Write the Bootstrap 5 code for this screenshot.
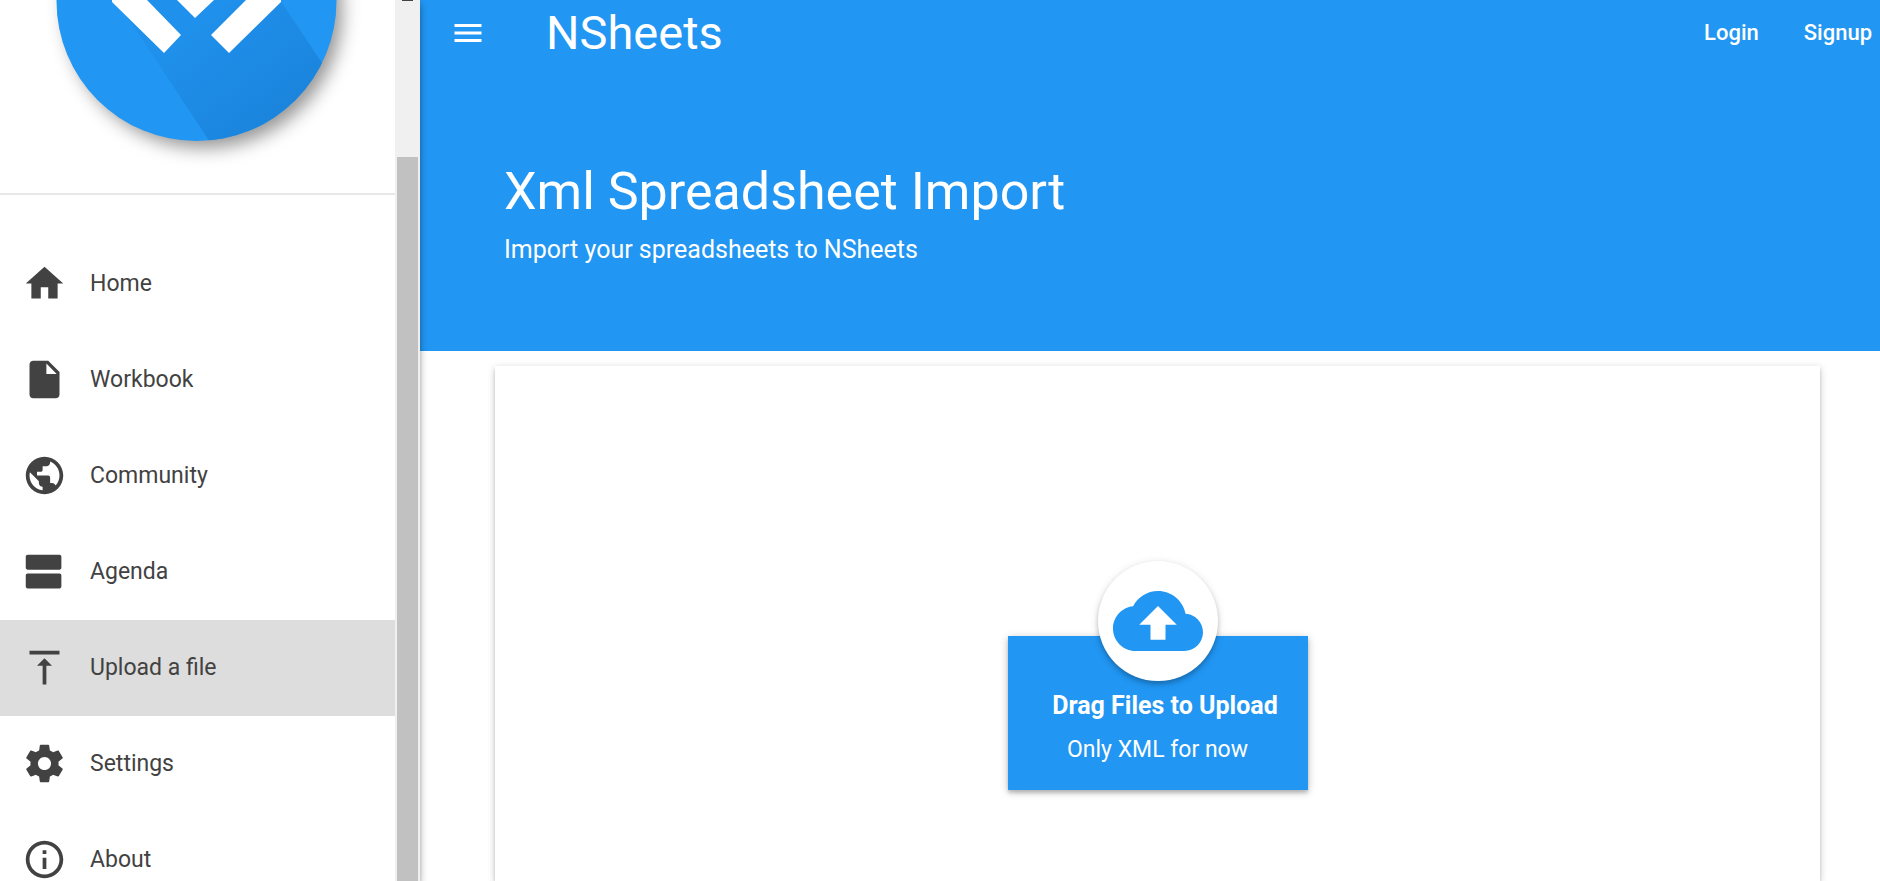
<!DOCTYPE html>
<html lang="en">
<head>
<meta charset="utf-8">
<meta name="viewport" content="width=device-width, initial-scale=1">
<title>NSheets</title>
<link rel="stylesheet" href="https://cdn.jsdelivr.net/npm/bootstrap@5.3.0/dist/css/bootstrap.min.css">
<style>
  :root { --brand: #2196f3; --ink: #424242; }
  body { font-family: Roboto, "Liberation Sans", sans-serif; font-size: 23px; line-height: 32px; color: var(--ink); }
  .side-panel { width: 420px; z-index: 2; box-shadow: 0 3px 4px rgba(0,0,0,.14), 0 4px 8px rgba(0,0,0,.3); }
  .brand-logo { height: 193px; }
  .side-rule { border-bottom: 2px solid #e8e8e8; margin-bottom: 41px; }
  .side-link { height: 96px; padding-left: 22px; gap: 23px; color: var(--ink); text-decoration: none; }
  .side-link svg { width: 45px; height: 45px; margin-bottom: 1px; fill: currentColor; }
  .side-link:hover, .side-link.active { background: #ddd; }
  .scroll-track { width: 25px; background: #f0f0f0; padding: 0 2px; }
  .scroll-arrow { width: 11px; height: 1px; background: #444; margin-bottom: 156px; }
  .scroll-thumb { background: #c1c1c1; }
  .hero { background: var(--brand); color: #fff; height: 351px; }
  .top-bar { height: 66px; padding: 0 8px 0 30px; }
  .menu-btn svg { width: 36px; height: 36px; fill: #fff; }
  .site-name { font-size: 47px; line-height: 66px; margin-left: 60px; }
  .top-links { gap: 45px; font-size: 22px; line-height: 34px; font-weight: 500; }
  .top-links a { color: #fff; text-decoration: none; }
  .hero-text { padding: 94px 84px 0; }
  .hero-text h1 { font-size: 52px; line-height: 64px; font-weight: 400; margin: 0 0 10px; }
  .hero-text p, .drop-title { font-size: 25px; }
  .sheet { margin: 15px 60px 0 75px; padding-top: 270px; background: #fff; box-shadow: 0 3px 3px rgba(0,0,0,.14), 0 2px 8px rgba(0,0,0,.2); }
  .drop-box { width: 300px; height: 154px; background: var(--brand); color: #fff; cursor: pointer; box-shadow: 0 3px 3px rgba(0,0,0,.14), 0 2px 8px rgba(0,0,0,.25); }
  .drop-icon { width: 120px; height: 120px; margin-top: -75px; margin-bottom: 9px; box-shadow: 0 3px 4px rgba(0,0,0,.18), 0 2px 8px rgba(0,0,0,.15); }
  .drop-icon svg { width: 90px; height: 90px; fill: var(--brand); }
  .drop-title { margin-bottom: 12px; padding-left: 15px; }
</style>
</head>
<body class="bg-white">
<div class="d-flex vh-100 overflow-hidden">
  <aside class="side-panel d-flex flex-shrink-0 bg-white position-relative">
    <div class="flex-grow-1 overflow-hidden">
      <svg class="brand-logo d-block w-100" viewBox="0 0 395 193" role="img" aria-label="NSheets logo">
        <defs>
          <linearGradient id="fold" gradientUnits="userSpaceOnUse" x1="190" y1="30" x2="270" y2="130">
            <stop offset="0" stop-color="#1f90eb"/><stop offset="1" stop-color="#1b84dc"/>
          </linearGradient>
          <clipPath id="disc"><circle cx="196.500" cy="1" r="140"/></clipPath>
          <filter id="soft" x="-20%" y="-20%" width="140%" height="140%"><feGaussianBlur stdDeviation="9"/></filter>
        </defs>
        <circle cx="204" cy="10" r="138" fill="#000" fill-opacity=".42" filter="url(#soft)"/>
        <circle cx="196.500" cy="1" r="140" fill="#2196f3"/>
        <path d="M116 0 210 142H340V90L280 0z" fill="url(#fold)" clip-path="url(#disc)"/>
        <path d="M112 0V2L164 53 181 35 147 0zM177 0 195 18 214 0zM246 0 211 35 229 53 281 2V0z" fill="#fff"/>
      </svg>
      <div class="side-rule"></div>
      <nav class="d-flex flex-column" aria-label="Main">
        <a class="side-link d-flex align-items-center" href="#"><svg viewBox="0 0 24 24" aria-hidden="true"><path d="M10 20v-6h4v6h5v-8h3L12 3 2 12h3v8z"/></svg><span>Home</span></a>
        <a class="side-link d-flex align-items-center" href="#"><svg viewBox="0 0 24 24" aria-hidden="true"><path d="M6 2c-1.100 0-1.990.900-1.990 2L4 20c0 1.100.890 2 1.990 2H18c1.100 0 2-.900 2-2V8l-6-6H6zm7 7V3.500L18.500 9H13z"/></svg><span>Workbook</span></a>
        <a class="side-link d-flex align-items-center" href="#"><svg viewBox="0 0 24 24" aria-hidden="true"><path d="M12 2C6.480 2 2 6.480 2 12s4.480 10 10 10 10-4.480 10-10S17.520 2 12 2zm-1 17.930c-3.950-.490-7-3.850-7-7.930 0-.620.080-1.210.210-1.790L9 15v1c0 1.100.900 2 2 2v1.930zm6.900-2.540c-.260-.810-1-1.390-1.900-1.390h-1v-3c0-.550-.450-1-1-1H8v-2h2c.550 0 1-.450 1-1V7h2c1.100 0 2-.900 2-2v-.410c2.930 1.190 5 4.060 5 7.410 0 2.080-.800 3.970-2.100 5.390z"/></svg><span>Community</span></a>
        <a class="side-link d-flex align-items-center" href="#"><svg viewBox="0 0 24 24" aria-hidden="true"><path d="M20 13H3c-.550 0-1 .450-1 1v6c0 .550.450 1 1 1h17c.550 0 1-.450 1-1v-6c0-.550-.450-1-1-1zm0-10H3c-.550 0-1 .450-1 1v6c0 .550.450 1 1 1h17c.550 0 1-.450 1-1V4c0-.550-.450-1-1-1z"/></svg><span>Agenda</span></a>
        <a class="side-link active d-flex align-items-center" href="#" aria-current="page"><svg viewBox="0 0 24 24" aria-hidden="true"><path d="M8 11h3v10h2V11h3l-4-4-4 4zM4 3v2h16V3H4z"/></svg><span>Upload a file</span></a>
        <a class="side-link d-flex align-items-center" href="#"><svg viewBox="0 0 24 24" aria-hidden="true"><path d="M19.430 12.980c.040-.320.070-.640.070-.980s-.030-.660-.070-.980l2.110-1.650c.190-.150.240-.420.120-.640l-2-3.460c-.120-.220-.390-.300-.610-.220l-2.490 1c-.520-.400-1.080-.730-1.690-.980l-.380-2.650C14.460 2.180 14.250 2 14 2h-4c-.250 0-.460.180-.490.420l-.380 2.650c-.610.250-1.170.590-1.690.980l-2.490-1c-.230-.090-.490 0-.610.220l-2 3.460c-.130.220-.070.490.120.640l2.110 1.650c-.040.320-.070.650-.070.980s.030.660.070.980l-2.110 1.650c-.190.150-.240.420-.120.640l2 3.460c.120.220.390.300.610.220l2.490-1c.520.400 1.080.730 1.690.980l.380 2.650c.030.240.240.420.490.420h4c.250 0 .460-.180.490-.420l.380-2.650c.610-.250 1.170-.590 1.690-.980l2.490 1c.230.090.490 0 .610-.220l2-3.460c.120-.220.070-.490-.120-.640l-2.110-1.650zM12 15.500c-1.930 0-3.500-1.570-3.500-3.500s1.570-3.500 3.500-3.500 3.500 1.570 3.500 3.500-1.570 3.500-3.500 3.500z"/></svg><span>Settings</span></a>
        <a class="side-link d-flex align-items-center" href="#"><svg viewBox="0 0 24 24" aria-hidden="true"><path d="M11 17h2v-6h-2v6zm1-15C6.480 2 2 6.480 2 12s4.480 10 10 10 10-4.480 10-10S17.520 2 12 2zm0 18c-4.410 0-8-3.590-8-8s3.590-8 8-8 8 3.590 8 8-3.590 8-8 8zM11 9h2V7h-2v2z"/></svg><span>About</span></a>
      </nav>
    </div>
    <div class="scroll-track d-flex flex-column flex-shrink-0" aria-hidden="true">
      <div class="scroll-arrow align-self-center"></div>
      <div class="scroll-thumb flex-grow-1"></div>
    </div>
  </aside>

  <div class="d-flex flex-column flex-grow-1">
    <header class="hero flex-shrink-0">
      <div class="top-bar d-flex align-items-center">
        <button class="menu-btn btn border-0 p-0 d-flex" type="button" aria-label="Menu"><svg viewBox="0 0 24 24" aria-hidden="true"><path d="M3 18h18v-2H3v2zm0-5h18v-2H3v2zm0-7v2h18V6H3z"/></svg></button>
        <span class="site-name">NSheets</span>
        <nav class="top-links d-flex ms-auto" aria-label="Account"><a href="#">Login</a><a href="#">Signup</a></nav>
      </div>
      <div class="hero-text">
        <h1>Xml Spreadsheet Import</h1>
        <p class="mb-0">Import your spreadsheets to NSheets</p>
      </div>
    </header>
    <main class="sheet flex-grow-1 d-flex flex-column align-items-center">
      <label class="drop-box d-flex flex-column align-items-center" for="xmlFile">
        <span class="drop-icon bg-white rounded-circle d-flex align-items-center justify-content-center flex-shrink-0"><svg viewBox="0 0 24 24" aria-hidden="true"><path d="M19.350 10.040C18.670 6.590 15.640 4 12 4 9.110 4 6.600 5.640 5.350 8.040 2.340 8.360 0 10.910 0 14c0 3.310 2.690 6 6 6h13c2.760 0 5-2.240 5-5 0-2.640-2.050-4.780-4.650-4.960zM14 13v4h-4v-4H7l5-5 5 5h-3z"/></svg></span>
        <span class="drop-title fw-bold">Drag Files to Upload</span>
        <span>Only XML for now</span>
      </label>
      <input class="visually-hidden" type="file" id="xmlFile" accept=".xml">
    </main>
  </div>
</div>
<script src="https://cdn.jsdelivr.net/npm/bootstrap@5.3.0/dist/js/bootstrap.bundle.min.js"></script>
</body>
</html>
